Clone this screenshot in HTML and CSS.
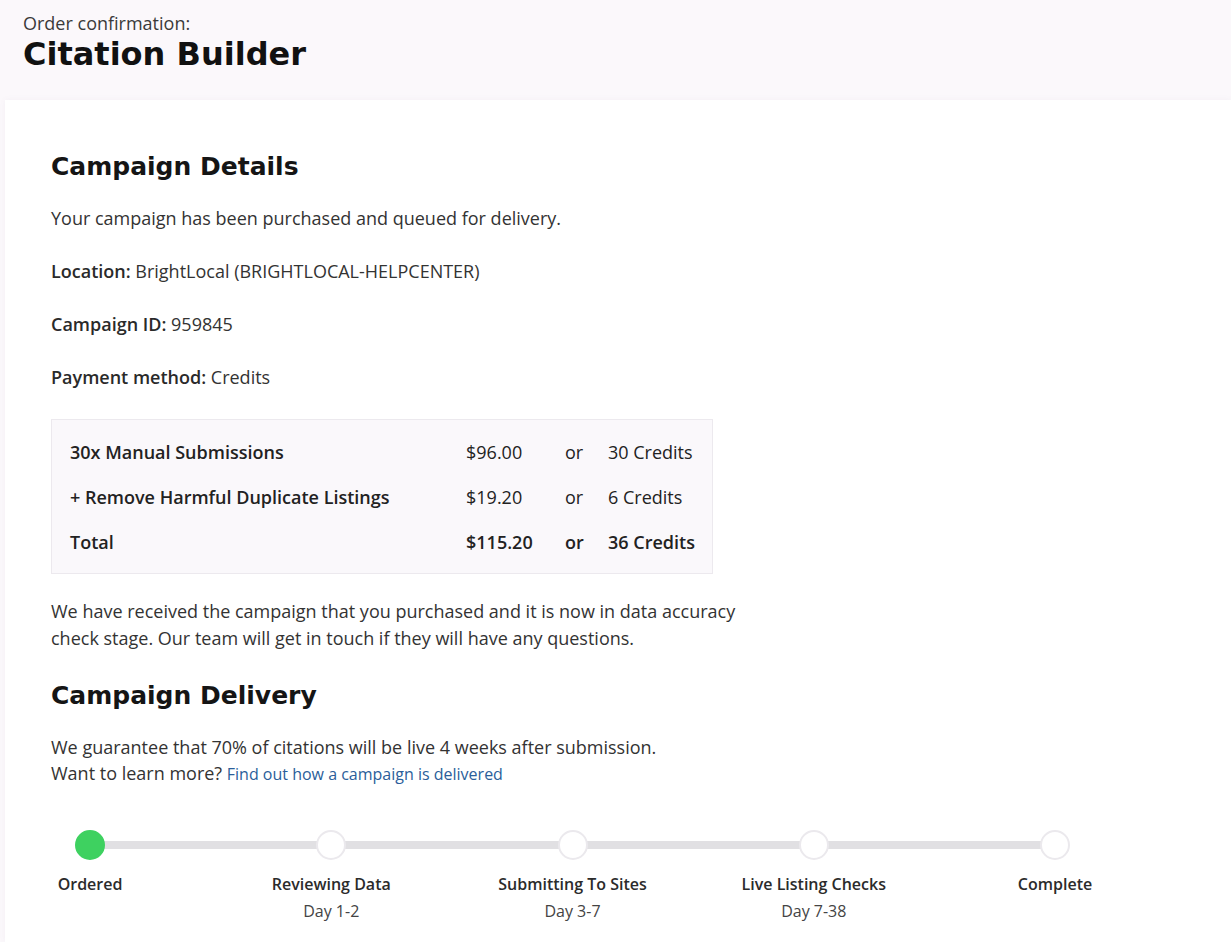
FILE: index.html
```html
<!DOCTYPE html>
<html lang="en">
<head>
  <meta charset="UTF-8">
  <meta name="viewport" content="width=device-width, initial-scale=1.0">
  <title>Order confirmation - Citation Builder</title>
  <link rel="stylesheet" href="styles.css">
</head>
<body>
  <header class="page-head">
    <p class="eyebrow">Order confirmation:</p>
    <h1>Citation Builder</h1>
  </header>

  <main class="card">
    <h2>Campaign Details</h2>
    <p class="line">Your campaign has been purchased and queued for delivery.</p>
    <p class="line"><strong>Location:</strong> BrightLocal (BRIGHTLOCAL-HELPCENTER)</p>
    <p class="line"><strong>Campaign ID:</strong> 959845</p>
    <p class="line"><strong>Payment method:</strong> Credits</p>

    <div class="summary">
      <table>
        <tr>
          <td class="item">30x Manual Submissions</td>
          <td class="price">$96.00</td>
          <td class="or">or</td>
          <td class="credits">30 Credits</td>
        </tr>
        <tr>
          <td class="item">+ Remove Harmful Duplicate Listings</td>
          <td class="price">$19.20</td>
          <td class="or">or</td>
          <td class="credits">6 Credits</td>
        </tr>
        <tr class="total">
          <td class="item">Total</td>
          <td class="price">$115.20</td>
          <td class="or">or</td>
          <td class="credits">36 Credits</td>
        </tr>
      </table>
    </div>

    <p class="note">We have received the campaign that you purchased and it is now in data accuracy check stage. Our team will get in touch if they will have any questions.</p>

    <h2 class="delivery-title">Campaign Delivery</h2>
    <p class="note">We guarantee that 70% of citations will be live 4 weeks after submission.<br>
      Want to learn more? <a href="#">Find out how a campaign is delivered</a></p>

    <div class="stepper">
      <div class="step done">
        <span class="dot"></span>
        <span class="step-name">Ordered</span>
      </div>
      <div class="step">
        <span class="dot"></span>
        <span class="step-name">Reviewing Data</span>
        <span class="step-day">Day 1-2</span>
      </div>
      <div class="step">
        <span class="dot"></span>
        <span class="step-name">Submitting To Sites</span>
        <span class="step-day">Day 3-7</span>
      </div>
      <div class="step">
        <span class="dot"></span>
        <span class="step-name">Live Listing Checks</span>
        <span class="step-day">Day 7-38</span>
      </div>
      <div class="step">
        <span class="dot"></span>
        <span class="step-name">Complete</span>
      </div>
    </div>
  </main>
</body>
</html>
```

FILE: styles.css
```css
/* page */
html, body {
  height: 100%;
}
body {
  margin: 0;
  background-color: #fbf8fb;
  font-family: "Open Sans", "Noto Sans", Arial, sans-serif;
  color: #333333;
  overflow: hidden;
}

.page-head {
  padding: 12px 23px 0;
  height: 88px;
  box-sizing: border-box;
}
.eyebrow {
  margin: 0;
  font-size: 18px;
  line-height: 22px;
  color: #3a3a3a;
}
.page-head h1 {
  margin: 0;
  font-family: "DejaVu Sans", "Noto Sans", sans-serif;
  font-size: 32px;
  line-height: 40px;
  font-weight: 700;
  color: #111111;
}

/* card */
.card {
  margin: 12px 0 0 5px;
  padding: 50px 46px 0;
  height: calc(100% - 100px);
  box-sizing: border-box;
  background-color: #ffffff;
  box-shadow: 0 0 6px rgba(120, 100, 130, 0.06);
}
.card h2 {
  margin: 0 0 23px;
  font-family: "DejaVu Sans", "Noto Sans", sans-serif;
  font-size: 25px;
  line-height: 34px;
  font-weight: 700;
  color: #151515;
}
.line {
  margin: 0 0 31px;
  font-size: 18px;
  line-height: 22px;
}
.line strong {
  font-weight: 600;
  color: #2a2a2a;
}

/* price summary */
.summary {
  width: 662px;
  margin-top: 8px;
  padding: 9px 0;
  background-color: #faf8fb;
  border: 1px solid #ece9ee;
  box-sizing: border-box;
}
.summary table {
  border-collapse: collapse;
  width: 100%;
}
.summary td {
  padding: 0;
  height: 45px;
  font-size: 18px;
  font-weight: 600;
  color: #222222;
}
.summary .item {
  padding-left: 18px;
  width: 396px;
}
.summary .price,
.summary .or,
.summary .credits {
  font-weight: 400;
}
.summary .price { width: 99px; }
.summary .or { width: 43px; }
.summary .total td { font-weight: 600; }

.note {
  margin: 24px 0 0;
  max-width: 700px;
  font-size: 18px;
  line-height: 27px;
}
.note a {
  color: #2b5e9a;
  font-size: 16px;
  text-decoration: none;
}

.card h2.delivery-title {
  margin: 27px 0 0;
}
.delivery-title + .note {
  margin-top: 21px;
  line-height: 26px;
}

/* delivery steps */
.stepper {
  display: flex;
  justify-content: space-between;
  width: 995px;
  margin: 43px 0 0 24px;
  background: linear-gradient(#e1e0e3, #e1e0e3) no-repeat;
  background-size: calc(100% - 28px) 8px;
  background-position: 14px 11px;
}
.step {
  display: flex;
  flex-direction: column;
  align-items: center;
  width: 30px;
}
.dot {
  width: 26px;
  height: 26px;
  border-radius: 50%;
  background-color: #ffffff;
  border: 2px solid #ebe9ed;
}
.step.done .dot {
  background-color: #3ed160;
  border-color: #3ed160;
}
.step-name {
  margin-top: 13px;
  white-space: nowrap;
  font-size: 16px;
  line-height: 23px;
  font-weight: 600;
  color: #2b2b2b;
}
.step-day {
  margin-top: 4px;
  white-space: nowrap;
  font-size: 16px;
  line-height: 23px;
  color: #444444;
}
```
